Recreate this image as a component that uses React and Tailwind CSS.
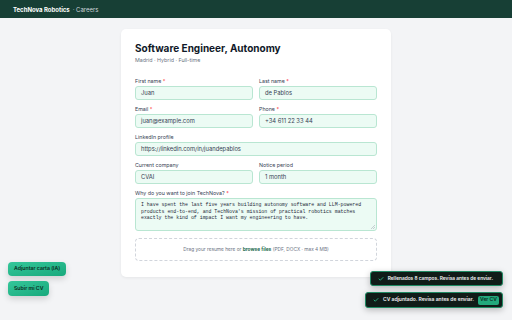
import { Check } from 'lucide-react';

const Field = ({ label, required, value, className = '' }) => (
    <div className={`flex flex-col ${className}`}>
        <label className="text-[5.3px] leading-[7px] text-gray-700 mb-[1px]">
            {label}
            {required && <span className="text-red-500"> *</span>}
        </label>
        <div className="h-[14px] rounded-[3px] border border-[#b9e6d2] bg-[#ecfbf4] px-[5px] flex items-center text-[5.8px] text-gray-700">
            {value}
        </div>
    </div>
);

const App = () => {
    return (
        <div className="relative min-h-screen bg-[#f3f4f6] font-['Inter',sans-serif] overflow-hidden" style={{ height: 320 }}>
            {/* Top bar */}
            <header className="h-[18px] bg-[#173f35] flex items-center px-[13px] text-[6px]">
                <span className="font-bold text-white">TechNova Robotics</span>
                <span className="text-gray-300 ml-[3px]">· Careers</span>
            </header>

            <main className="flex justify-center pt-[11px]">
                <div className="w-[270px] bg-white rounded-[5px] shadow-[0_1px_3px_rgba(0,0,0,0.06)] px-[14px] pt-[13px] pb-[16px]">
                    <h1 className="text-[10px] leading-[13px] font-bold text-gray-900">Software Engineer, Autonomy</h1>
                    <p className="text-[5.3px] leading-[7px] text-gray-500 mt-[2px]">Madrid · Hybrid · Full-time</p>

                    <div className="mt-[14px] flex flex-col gap-[6px]">
                        <div className="grid grid-cols-2 gap-[6px]">
                            <Field label="First name" required value="Juan" />
                            <Field label="Last name" required value="de Pablos" />
                        </div>
                        <div className="grid grid-cols-2 gap-[6px]">
                            <Field label="Email" required value="juan@example.com" />
                            <Field label="Phone" required value="+34 611 22 33 44" />
                        </div>
                        <Field label="LinkedIn profile" value="https://linkedin.com/in/juandepablos" />
                        <div className="grid grid-cols-2 gap-[6px]">
                            <Field label="Current company" value="CVAI" />
                            <Field label="Notice period" value="1 month" />
                        </div>
                        <div className="flex flex-col">
                            <label className="text-[5.3px] leading-[7px] text-gray-700 mb-[1px]">
                                Why do you want to join TechNova?<span className="text-red-500"> *</span>
                            </label>
                            <div className="relative h-[33px] rounded-[3px] border border-[#b9e6d2] bg-[#ecfbf4] px-[5px] pt-[3px] font-['Liberation_Mono',monospace] text-[4.9px] leading-[6.5px] text-gray-800">
                                I have spent the last five years building autonomy software and LLM-powered products end-to-end, and TechNova's mission of practical robotics matches exactly the kind of impact I want my engineering to have.
                                <svg className="absolute right-[1px] bottom-[1px]" width="4" height="4" viewBox="0 0 4 4">
                                    <path d="M4 0L0 4M4 2L2 4" stroke="#9ca3af" strokeWidth="0.5" />
                                </svg>
                            </div>
                        </div>
                        <div className="mt-[1px] h-[23px] rounded-[4px] border border-dashed border-gray-300 flex items-center justify-center text-[4.8px] text-gray-500">
                            Drag your resume here or&nbsp;<span className="font-bold text-[#1f6b50]">browse files</span>&nbsp;(PDF, DOCX · max 4 MB)
                        </div>
                    </div>
                </div>
            </main>

            {/* Floating helper buttons */}
            <div className="absolute left-[8px] bottom-[24px] flex flex-col items-start gap-[5px]">
                <button className="h-[14px] px-[6px] rounded-[4px] bg-gradient-to-br from-[#34c79a] to-[#17a97c] text-[5.2px] font-semibold text-[#0b2b22] shadow-[0_3px_6px_rgba(0,0,0,0.15)]">
                    Adjuntar carta (IA)
                </button>
                <button className="h-[15px] px-[6px] rounded-[4px] bg-gradient-to-br from-[#34c79a] to-[#17a97c] text-[5.2px] font-semibold text-[#0b2b22] shadow-[0_3px_6px_rgba(0,0,0,0.15)]">
                    Subir mi CV
                </button>
            </div>

            {/* Toasts */}
            <div className="absolute right-[9px] bottom-[12px] flex flex-col items-end gap-[6px]">
                <div className="h-[15px] pl-[7px] pr-[9px] rounded-[3px] bg-[#101c18] border border-[#1f8a63] flex items-center gap-[4px] shadow-[0_2px_6px_rgba(0,0,0,0.25)]">
                    <Check size={6} strokeWidth={3} className="text-[#34d399]" />
                    <span className="text-[4.8px] font-semibold text-gray-100">Rellenados 8 campos. Revisa antes de enviar.</span>
                </div>
                <div className="h-[16px] pl-[7px] pr-[3px] rounded-[3px] bg-[#101c18] border border-[#1f8a63] flex items-center gap-[4px] shadow-[0_2px_6px_rgba(0,0,0,0.25)]">
                    <Check size={6} strokeWidth={3} className="text-[#34d399]" />
                    <span className="text-[5px] font-semibold text-gray-100">CV adjuntado. Revisa antes de enviar.</span>
                    <button className="h-[9px] w-[21px] rounded-[2px] bg-[#22a97c] text-[5px] font-semibold text-[#0b2b22]">Ver CV</button>
                </div>
            </div>
        </div>
    );
};

export default App;
